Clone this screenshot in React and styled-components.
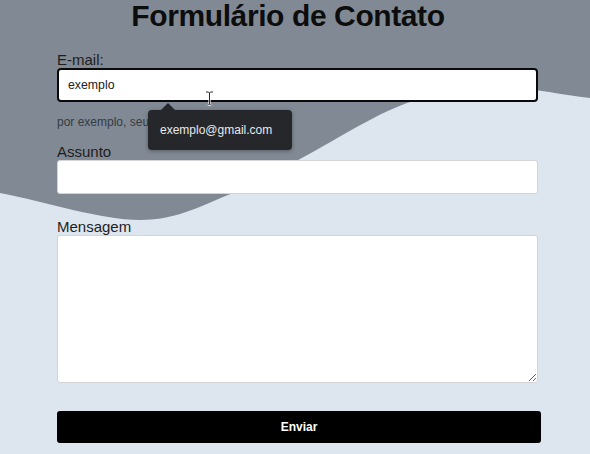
import React from "react";
import styled, { createGlobalStyle } from "styled-components";

const GlobalStyle = createGlobalStyle`
  html, body {
    margin: 0;
    padding: 0;
    background: #dde5ee;
    font-family: "Liberation Sans", Arial, sans-serif;
  }
  * { box-sizing: border-box; }
`;

const Page = styled.div`
  position: relative;
  width: 590px;
  height: 454px;
  overflow: hidden;
  background: #dde5ee;
`;

const Wave = styled.svg`
  position: absolute;
  left: 0;
  top: 0;
  width: 590px;
  height: 454px;
  z-index: 0;
`;

const Content = styled.div`
  position: relative;
  z-index: 1;
  display: flex;
  flex-direction: column;
`;

const Title = styled.h1`
  margin: 0;
  padding: 1px 14px 0 0;
  font-size: 30px;
  line-height: 30px;
  font-weight: 700;
  letter-spacing: -0.4px;
  color: #0d0d0d;
  text-align: center;
`;

const Form = styled.form`
  display: flex;
  flex-direction: column;
  width: 484px;
  margin: 20px 0 0 57px;
`;

const Field = styled.div`
  position: relative;
  display: flex;
  flex-direction: column;
  width: 481px;
  margin-top: ${(p) => p.$gap || 0}px;
`;

const Label = styled.label`
  display: block;
  font-size: 15px;
  line-height: 17px;
  color: #1e1e1e;
`;

const Input = styled.input`
  width: 481px;
  height: 34px;
  padding: 0 9px;
  border: ${(p) => (p.$focused ? "2px solid #0a0a0a" : "1px solid #d2d4d8")};
  border-radius: ${(p) => (p.$focused ? "4px" : "3px")};
  background: #fff;
  font-family: "Liberation Sans", Arial, sans-serif;
  font-size: 12.3px;
  color: #222;
  outline: none;
`;

const TextArea = styled.textarea`
  width: 481px;
  height: 148px;
  padding: 8px 9px;
  border: 1px solid #d2d4d8;
  border-radius: 3px;
  background: #fff;
  font-family: "Liberation Sans", Arial, sans-serif;
  font-size: 12.3px;
  outline: none;
  display: block;
`;

const Hint = styled.div`
  margin-top: 13px;
  font-size: 12px;
  line-height: 14px;
  color: #333b44;
`;

const Popup = styled.div`
  position: absolute;
  left: 91px;
  top: 59px;
  width: 144px;
  height: 40px;
  display: flex;
  align-items: center;
  padding-left: 12px;
  background: #26272a;
  border-radius: 4px;
  box-shadow: 0 1px 4px rgba(0, 0, 0, 0.35);
  color: #e8eaed;
  font-size: 12px;
  z-index: 3;

  &::before {
    content: "";
    position: absolute;
    left: 13px;
    top: -7px;
    border-left: 7px solid transparent;
    border-right: 7px solid transparent;
    border-bottom: 7px solid #26272a;
  }
`;

const Cursor = styled.svg`
  position: absolute;
  left: 148px;
  top: 40px;
  z-index: 4;
`;

const Button = styled.button`
  width: 484px;
  height: 32px;
  margin-top: 28px;
  border: none;
  border-radius: 3px;
  background: #000;
  color: #fff;
  font-family: "Liberation Sans", Arial, sans-serif;
  font-size: 12px;
  font-weight: 700;
  cursor: pointer;
`;

export default function App() {
  return (
    <Page>
      <GlobalStyle />
      <Wave viewBox="0 0 590 454" aria-hidden="true">
        <path
          fill="#818a94"
          d="M0,0 H590 V98 C560,94.7 530.5,87.2 500,88 C469.5,88.8 440.3,91.2 407,103 C373.7,114.8 329,144 300,159 C271,174 259.7,182.8 233,193 C206.3,203.2 178.8,220 140,220 C101.2,220 46.7,202 0,193 Z"
        />
      </Wave>
      <Content>
        <Title>Formulário de Contato</Title>
        <Form onSubmit={(e) => e.preventDefault()}>
          <Field>
            <Label htmlFor="email">E-mail:</Label>
            <Input id="email" type="text" $focused defaultValue="exemplo" />
            <Cursor width="9" height="15" viewBox="0 0 9 15">
              <path d="M1,1 H3.5 L4.5,2 L5.5,1 H8 M4.5,2 V13 M1,14 H3.5 L4.5,13 L5.5,14 H8" fill="none" stroke="#ffffff" strokeWidth="2.2" />
              <path d="M1,1 H3.5 L4.5,2 L5.5,1 H8 M4.5,2 V13 M1,14 H3.5 L4.5,13 L5.5,14 H8" fill="none" stroke="#2a2a2a" strokeWidth="1" />
            </Cursor>
            <Popup>exemplo@gmail.com</Popup>
            <Hint>por exemplo, seu</Hint>
          </Field>
          <Field $gap={14}>
            <Label htmlFor="assunto">Assunto</Label>
            <Input id="assunto" type="text" />
          </Field>
          <Field $gap={24}>
            <Label htmlFor="mensagem">Mensagem</Label>
            <TextArea id="mensagem" />
          </Field>
          <Button type="submit">Enviar</Button>
        </Form>
      </Content>
    </Page>
  );
}
